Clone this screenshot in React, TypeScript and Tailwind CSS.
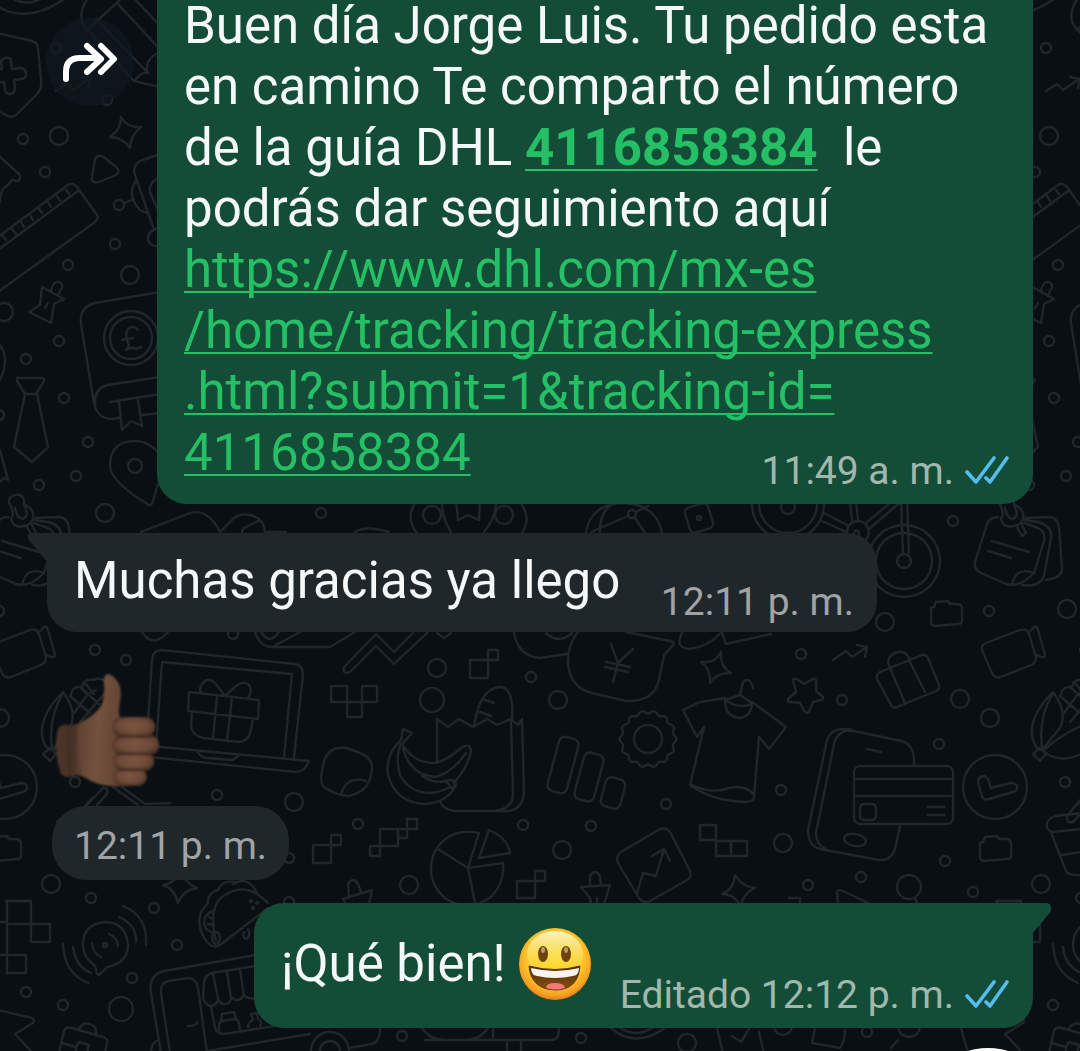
import React, { useState } from 'react';

const smallDots: [number, number][] = [
  [56, 48], [23, 139], [45, 172], [119, 205], [115, 244], [68, 265], [59, 341], [26, 359], [64, 398],
  [-1, 415], [88, 442], [76, 476], [39, 485], [321, 513], [953, 521], [95, 650], [126, 660], [233, 634],
  [531, 677], [801, 654], [842, 700], [989, 611], [939, 744], [781, 790], [217, 795], [75, 782],
  [358, 824], [289, 858], [91, 898], [154, 908], [177, 945], [132, 978], [26, 992], [63, 1005],
  [523, 825], [591, 826], [666, 804], [945, 861], [808, 885], [861, 877], [973, 892], [402, 1036],
  [581, 1038], [867, 1032], [289, 902], [107, 100],
];

const bigDots: [number, number, number][] = [
  [59, 136, 9], [130, 275, 9], [4, 312, 9], [105, 513, 9], [885, 622, 9], [77, 609, 9], [960, 699, 9],
  [437, 668, 9], [432, 700, 12], [558, 700, 9], [0, 718, 9], [294, 802, 9], [51, 884, 9], [121, 1009, 12],
  [562, 850, 9], [409, 885, 9], [783, 843, 9], [909, 887, 12], [687, 1043, 9], [783, 1026, 9],
];

const squares: [number, number, number, number][] = [
  [470, 660, 18, 18], [488, 650, 10, 10], [331, 686, 16, 16], [347, 702, 15, 15], [362, 686, 15, 16],
  [313, 845, 18, 18], [331, 835, 10, 10], [7, 901, 24, 23], [31, 924, 19, 18], [7, 955, 19, 18],
  [380, 829, 18, 17], [407, 819, 10, 10], [398, 829, 9, 9], [370, 846, 10, 10], [517, 881, 18, 17],
  [535, 871, 10, 10], [700, 825, 16, 15], [716, 841, 15, 15], [731, 841, 16, 15],
];

const sunPath =
  Array.from({ length: 120 }, (_, i) => {
    const a = (i / 120) * Math.PI * 2;
    const r = 27 + 1.5 * Math.cos(a * 14);
    return `${i ? 'L' : 'M'}${(648 + r * Math.cos(a)).toFixed(1)} ${(739 + r * Math.sin(a)).toFixed(1)}`;
  }).join('') + 'Z';

const doodlePaths = [
  // shield with cross
  'M-4 35Q0 33 6 35L32 41Q37 42 38 48L41 80Q42 88 38 93L17 114Q12 119 6 115L-6 109',
  'M5 58Q10 56 11 61L12 69L20 68Q26 68 26 74Q26 79 21 79L14 80L15 88Q15 94 10 94Q6 94 5 90L4 82L-4 83M-4 70L2 69L1 62Q1 59 5 58',
  // pencil
  'M90 -4Q79 8 82 22L87 30L121 -1M117 3L157 46M134 -2L160 26M86 28L134 81L160 87M134 81Q142 71 148 73M160 52Q145 58 147 72L96 19',
  // coin
  'M-10 2Q25 27 64 -1M13 -1Q27 6 41 -1',
  'M56 91L67 84L73 90L89 79M80 77L90 79L88 88',
  'M833 660L846 651L852 657L867 647M857 645L867 647L865 657',
  'M121 117Q127 128 141 127Q131 135 130 148Q124 138 110 137Q121 130 121 117Z',
  'M721 652Q720 667 731 673Q716 673 710 683Q711 669 701 662Q715 664 721 652Z',
  'M180 869Q184 883 197 888Q183 890 178 903Q175 889 163 885Q175 884 180 869Z',
  'M735 875Q742 887 755 888Q743 893 741 906Q734 894 722 894Q734 889 735 875Z',
  'M95 159Q99 153 105 158L116 167Q121 171 116 175L99 182Q91 184 92 177Z',
  'M-2 155L19 174Q22 178 18 181L12 180Q8 185 4 188Q0 192 0 202',
  // ruler
  'M-2 237L68 185Q73 182 77 187L97 215Q99 219 95 222L-2 292M-2 250L78 191M2 235L6 240M12 229L16 234M21 222L24 227M30 215L33 220M39 209L42 213M48 202L51 207M57 196L60 201M66 190L69 194',
  // robot
  'M160 154L140 161Q132 166 135 175L153 227M136 181Q126 195 140 210L147 213M124 203L132 200M160 227Q147 231 148 240Q150 247 160 246M160 177Q148 183 150 192L157 208',
  // pushpins
  'M42 287L64 299L54 304L51 323L29 312L40 305ZM51 291Q53 281 59 282Q65 285 60 291L58 296M48 303L45 308',
  'M581 887L610 885L604 904M581 887L590 898L591 904M590 885L590 876Q595 868 600 876L601 885M597 898V904',
  'M343 899L372 890L369 904M343 899L346 904M349 896L348 884Q353 876 358 884L361 892',
  'M-2 342Q12 360 -2 383',
  // tie
  'M17 378L43 378Q45 379 44 381L36 394L25 394L17 381ZM25 394L14 447L32 462L48 447L37 394',
  'M0 450L8 480L4 478L0 482',
  // book
  'M160 292L95 303Q79 307 81 324L93 397Q95 419 112 419L119 418M160 377L108 385Q94 388 95 405M110 402L160 394M119 402L122 430L131 421L142 426L138 400M142 415L160 413',
  'M138 330Q134 325 129 328Q125 330 127 340L129 345L126 350Q133 346 136 349L142 347M122 340L133 338',
  // map pin
  'M149 505Q111 482 110 466Q110 441 135 441Q150 441 160 455M158 484L153 501Q152 506 149 505',
  // sticky notes
  'M998 517Q990 517 987 524L975 562Q973 569 981 573L1006 584Q1020 588 1034 573L1044 541Q1046 532 1038 528L1024 523M1012 585Q1016 566 1034 573M1024 520L1038 522Q1053 526 1051 538L1045 570Q1044 588 1022 585M1026 518L1050 517Q1058 518 1059 528L1062 567Q1063 578 1046 580M992 541L1029 552M988 551L1011 558M1017 527L1022 536L1026 533L1021 523',
  'M1001 506Q996 501 1002 496Q1012 492 1014 500L1014 504L1020 508Q1028 517 1018 525Q1004 530 1001 519L1003 514ZM1005 508Q1007 519 1013 519Q1020 516 1014 505',
  'M141 532L190 513Q208 508 220 532L234 518Q241 513 250 515Q264 518 265 532H286M242 532Q242 529 246 527L260 520M355 532Q365 525 389 532',
  // medal
  'M417 500Q404 517 417 533M442 500Q441 516 451 532M496 500Q497 516 484 532M518 500Q533 516 522 533M456 500L458 520L468 515L479 520L480 500',
  // ball
  'M586 533Q590 504 624 503Q657 505 662 533M591 532L628 516M600 532Q599 512 614 503M635 518L645 533M636 512L648 506',
  // bicycle
  'M901 500L903 553M907 500L909 553M824 513L847 525M822 521L846 532M850 500L852 521M856 500L858 520M894 500L867 522M903 500L869 529M854 535Q854 529 858 531Q860 534 858 539',
  // camera
  'M982 650Q981 645 986 643L1020 630Q1027 628 1029 634L1036 657Q1036 663 1031 665L1001 677Q995 679 992 673ZM1028 633L1034 627Q1037 626 1038 630L1045 655Q1045 658 1041 657L1035 654',
  'M142 632Q153 649 168 632M255 632Q260 647 272 647H330L355 632M261 632Q270 646 279 632M276 645L300 632',
  'M344 667L376 634L394 652L413 633M350 672L376 646L394 664L428 632M344 667Q342 675 350 672M437 633L444 638L451 633',
  'M514 633Q518 656 540 658L567 654M546 633Q559 645 572 633',
  // money bag
  'M578 632Q567 645 568 665Q571 688 592 693L626 701Q654 702 659 680L664 655L673 645Q675 642 670 641L626 632M611 644L618 663L633 649M618 663L613 682M606 662L630 667M605 667L628 672M682 633Q674 648 690 649Q707 647 721 633M722 633L726 644L771 634',
  // laptop and gift
  'M147 740L152 659Q153 650 162 650L295 664Q303 665 303 675L294 757M156 747L162 662L292 674L284 757M150 746L309 761Q305 772 296 772L150 757M197 751Q201 758 207 758L232 760Q236 759 239 755',
  'M189 692L259 700L258 719L188 711ZM192 713L191 725Q192 736 203 738L239 742Q249 741 251 730L253 719M217 697L213 738M232 698L227 741M225 696L215 683Q208 676 202 684Q198 690 202 693M225 696L236 686Q246 679 250 687Q252 693 248 698',
  'M323 766Q326 746 346 748L358 752Q372 757 372 768Q371 792 348 796Q335 795 324 787Q319 783 323 766M341 795Q346 775 366 781',
  // check badge
  'M978 782Q978 776 985 776L988 779L991 788L1011 783Q1018 783 1017 789Q1016 791 1013 792L989 799Q984 801 982 796Z',
  'M983 842L985 837L997 836L999 839L1007 839Q1011 840 1011 844V856Q1011 859 1007 859L984 861Q980 860 980 857V843Z',
  'M934 607L936 602L948 601L950 604L958 604Q962 605 962 609V621Q962 624 958 624L935 626Q931 625 931 622V608Z',
  'M87 805L103 788Q109 787 107 794L97 805M113 787L138 805M122 787L145 804L170 803',
  // taco
  'M216 941Q207 905 225 895Q247 881 268 903M268 908L220 945Q213 949 207 942Q196 928 201 912L208 903Q207 893 218 890Q222 880 235 882M233 884Q248 875 257 893M215 910Q200 915 206 929L213 933M209 917L213 919M208 924L214 925M244 932Q242 938 247 939Q251 936 248 929',
  'M7 924V955M-2 922H7M-2 955H7',
  // chat bubble
  'M95 966L97 974Q99 976 101 973L107 967Q128 963 128 945Q126 922 105 922Q83 924 83 945Q83 957 95 966M109 934Q117 937 118 946M92 943Q93 954 101 957M119 917Q137 925 136 942M123 906Q148 916 146 945M73 947Q75 966 91 973M63 944Q64 973 88 983',
  'M-2 1010L32 1018Q35 1020 33 1023L15 1034L31 1051',
  'M59 1053L64 1031Q66 1026 72 1028L103 1037Q108 1039 107 1043L105 1053M79 1029Q82 1022 90 1024Q97 1027 96 1034M62 1043L76 1047L79 1042L89 1045L87 1053M76 1047V1053',
  // shop front
  'M161 1053L151 993Q148 975 164 971L262 954M170 1053L161 993Q160 983 168 981L188 978Q196 978 198 988L207 1053M188 1026Q197 1026 197 1022M262 965L212 973Q205 975 204 983L203 998Q206 1006 212 1006Q218 1004 218 998L213 974M227 972L231 998M240 969L244 996M218 999Q220 1005 226 1004Q231 1003 231 997Q238 1004 244 995Q248 1000 258 998M211 1007L215 1027Q216 1034 224 1034L300 1022M195 1053L310 1034M151 1053Q151 1043 158 1040',
  'M219 1031V1024Q219 1022 223 1021L234 1019Q238 1019 239 1023L240 1030M221 1021L222 1014L234 1012L236 1019M248 1027Q248 1022 253 1020L251 1014L257 1013L258 1019Q263 1022 260 1026',
  'M349 1048L372 1044Q380 1042 380 1028M422 1028Q430 1040 445 1040M425 1040H552Q559 1040 559 1028M493 1028V1040M488 1028Q480 1040 465 1040M507 1040V1053M521 1040V1053M611 1028Q635 1049 665 1028M620 1028Q636 1038 652 1028M717 1028L723 1053M732 1036L741 1042L749 1029M759 1032L763 1050M815 1028L812 1043L840 1048Q845 1040 845 1030M898 1040L891 1048M961 1028L968 1053',
  // suitcase
  'M880 672L922 655Q926 654 928 658L939 685Q940 689 936 691L897 707Q893 709 891 705L877 679Q876 674 880 672M890 668L905 703M909 660L925 692M890 668Q884 656 898 652Q906 650 910 660',
  'M793 680Q794 678 797 679L804 684L813 679Q816 678 816 681V691L823 697Q824 699 821 700L813 702L809 712Q807 714 804 711L800 703L789 702Q787 701 788 699L796 692Z',
  // shirt
  'M725 698L700 702L683 710L697 737L704 727L690 785Q712 801 745 802Q755 801 754 797L759 737L769 749L786 727L752 702M725 698Q724 717 740 718Q752 716 752 702M727 701Q738 709 752 704M725 700L740 695L752 703M740 695L743 682Q750 676 753 688M690 784Q710 794 725 789Q745 783 754 795',
  // phone
  'M914 765Q915 744 901 741L845 729Q832 728 827 740L808 830Q808 846 820 849L879 860Q893 861 896 845L900 826M850 729Q836 733 834 744L816 833Q816 845 826 849M867 749L881 752',
  'M854 779H953M854 796H953M928 807H944M928 815H944',
  // corn
  'M63 692Q40 715 42 735Q44 747 50 750M63 692Q78 712 70 728L52 750M63 693Q48 718 52 748M50 748L56 754L50 761L43 754ZM54 750Q74 732 100 722M54 752Q72 765 95 752M71 695Q72 686 82 687Q84 678 94 680Q99 676 106 682M70 696L90 713M80 687L99 704M74 713L88 694L96 690M80 722L104 694M84 682L94 694',
  // cup
  'M92 813L65 816Q55 820 57 828L61 832L92 829M61 832L76 871Q78 876 92 875M71 855L92 852M92 798L77 816Q76 824 83 822L92 812',
  // grocery bag and bread
  'M437 762L437 719L448 727L459 719L473 727L487 719L497 725L511 719L518 725L522 719L524 792Q523 810 507 811L455 811Q443 810 440 801M511 720L513 795Q513 808 495 811M474 726Q480 688 500 687Q514 687 512 720M485 700L494 703M480 712L491 716',
  // bananas
  'M401 740Q385 755 388 775Q396 803 425 804Q447 803 456 785M401 744Q395 757 400 775Q410 793 430 793Q442 792 450 787M401 740L403 729L412 733L402 744M403 745Q413 763 435 763Q448 760 461 748Q470 742 471 751Q468 767 454 783M403 748Q410 775 435 777Q452 773 466 753M422 776Q436 785 450 780Q458 780 455 785L452 789M447 782L452 789',
  // pie
  'M479 833Q448 827 434 853Q424 880 446 899Q470 913 492 896Q505 882 503 863L468 868L438 849M468 868L479 833M468 868L475 903M489 830Q508 838 510 853L479 858Z',
  'M621 852L660 829Q666 827 670 832L690 871Q692 877 687 880L650 901Q643 904 639 898L618 863Q615 856 621 852ZM637 893L643 873L656 876L664 849M652 856L664 849L670 861',
  'M789 898H800V905M838 905L837 892Q838 889 843 891L870 904M915 899L919 905M996 901H1021',
];

function DoodleTile() {
  return (
    <g id="doodles">
      {smallDots.map(([x, y]) => <circle key={`${x}-${y}`} cx={x} cy={y} r={5} />)}
      {bigDots.map(([x, y, r]) => <circle key={`${x}-${y}`} cx={x} cy={y} r={r} />)}
      {squares.map(([x, y, w, h]) => <rect key={`${x}-${y}`} x={x} y={y} width={w} height={h} />)}
      {doodlePaths.map((d) => <path key={d} d={d} />)}
      <path d={sunPath} />
      <circle cx={648} cy={739} r={14} />
      <circle cx={131} cy={338} r={27} />
      <circle cx={131} cy={338} r={21} />
      <circle cx={135} cy={466} r={7} />
      <circle cx={432} cy={515} r={9} />
      <circle cx={504} cy={515} r={9} />
      <circle cx={632} cy={514} r={4} />
      <rect x={687} y={505} width={24} height={26} rx={5} transform="rotate(-17 699 518)" />
      <circle cx={699} cy={518} r={2} />
      <circle cx={788} cy={504} r={36} />
      <circle cx={788} cy={504} r={29} />
      <circle cx={788} cy={507} r={7} />
      <circle cx={904} cy={561} r={36} />
      <circle cx={904} cy={561} r={28} />
      <circle cx={904} cy={561} r={7} />
      <circle cx={858} cy={532} r={11} />
      <circle cx={995} cy={787} r={32} />
      <circle cx={105} cy={945} r={2} />
      <circle cx={251} cy={901} r={1} />
      <circle cx={257} cy={903} r={1} />
      <circle cx={253} cy={908} r={1} />
      <ellipse cx={216} cy={938} rx={4} ry={6} />
      <ellipse cx={855} cy={840} rx={11} ry={6} transform="rotate(10 855 840)" />
      <rect x={854} y={766} width={99} height={58} rx={6} />
      <rect x={860} y={804} width={16} height={16} rx={4} />
      <rect x={553} y={737} width={20} height={56} rx={6} transform="rotate(15 563 765)" />
      <rect x={579} y={753} width={20} height={48} rx={6} transform="rotate(15 589 777)" />
      <rect x={603} y={778} width={20} height={30} rx={6} transform="rotate(15 613 793)" />
      <circle cx={330} cy={1051} r={19} />
      <circle cx={330} cy={1051} r={10} />
      <circle cx={909} cy={1026} r={11} />
    </g>
  );
}

function Wallpaper() {
  return (
    <svg
      aria-hidden="true"
      className="pointer-events-none absolute inset-0 h-full w-full"
      viewBox="0 0 1080 1051"
      preserveAspectRatio="xMidYMin slice"
      fill="none"
      stroke="#20262a"
      strokeWidth={2.4}
      strokeLinecap="round"
      strokeLinejoin="round"
    >
      <DoodleTile />
      <use href="#doodles" x={990} />
      <use href="#doodles" x={-990} />
    </svg>
  );
}

function ReadTicks() {
  return (
    <svg role="img" aria-label="Leído" className="ml-[11px] h-8 w-11 shrink-0" viewBox="0 0 44 32" fill="none" stroke="#53bdeb" strokeWidth={3.6} strokeLinecap="round" strokeLinejoin="round">
      <path d="M2 17L11 27L29 3" />
      <path d="M21 23L25 27L42 3" />
    </svg>
  );
}

function Smiley() {
  return (
    <svg role="img" aria-label="😃" className="h-18 w-18 shrink-0" viewBox="0 0 72 72">
      <defs>
        <radialGradient id="face" cx="50%" cy="42%" r="58%">
          <stop offset="0" stopColor="#fbd928" />
          <stop offset="0.65" stopColor="#fccb2b" />
          <stop offset="0.88" stopColor="#f9a322" />
          <stop offset="1" stopColor="#e37c1c" />
        </radialGradient>
        <linearGradient id="shine" x1="0" y1="0" x2="0" y2="1">
          <stop offset="0" stopColor="#fdf3c4" />
          <stop offset="1" stopColor="#fbdc3c" stopOpacity="0" />
        </linearGradient>
        <linearGradient id="mouth" x1="0" y1="0" x2="0" y2="1">
          <stop offset="0" stopColor="#4e2c05" />
          <stop offset="1" stopColor="#8a5208" />
        </linearGradient>
      </defs>
      <circle cx="36" cy="36" r="36" fill="url(#face)" />
      <ellipse cx="36" cy="26" rx="28" ry="23" fill="url(#shine)" />
      <ellipse cx="24" cy="26" rx="5" ry="8" fill="#6f4308" />
      <ellipse cx="47" cy="26" rx="5" ry="8" fill="#6f4308" />
      <ellipse cx="24" cy="22" rx="2" ry="3" fill="#b99a6b" />
      <ellipse cx="47" cy="22" rx="2" ry="3" fill="#b99a6b" />
      <path d="M10 38Q36 45 61 38Q59 62 36 62Q12 61 10 38Z" fill="url(#mouth)" stroke="#5a3305" strokeWidth="1" />
      <path d="M12 40Q36 46 60 40Q60 47 54 48Q36 52 18 48Q12 47 12 40Z" fill="#f7f3ef" />
      <path d="M27 60Q27 55 36 55Q45 55 46 60Q36 63 27 60Z" fill="#f4777c" />
    </svg>
  );
}

function ThumbsUp() {
  return (
    <svg role="img" aria-label="👍🏾" className="h-29 w-27" viewBox="0 0 108 116">
      <defs>
        <linearGradient id="palm" x1="0" y1="0.3" x2="1" y2="0.4">
          <stop offset="0" stopColor="#3d2a20" />
          <stop offset="0.35" stopColor="#604233" />
          <stop offset="0.6" stopColor="#74523e" />
          <stop offset="1" stopColor="#5d4030" />
        </linearGradient>
        <radialGradient id="finger" cx="50%" cy="45%" r="60%">
          <stop offset="0" stopColor="#7b5540" />
          <stop offset="0.55" stopColor="#6f4c39" />
          <stop offset="1" stopColor="#483023" />
        </radialGradient>
        <linearGradient id="wrist" x1="0" y1="0" x2="1" y2="0">
          <stop offset="0" stopColor="#573b2d" />
          <stop offset="0.5" stopColor="#3d291f" />
          <stop offset="1" stopColor="#3d291f" stopOpacity="0" />
        </linearGradient>
        <filter id="soften" x="-5%" y="-5%" width="110%" height="110%">
          <feGaussianBlur stdDeviation="0.8" />
        </filter>
      </defs>
      <g filter="url(#soften)">
        <path d="M6 56Q9 51 16 52Q24 53 31 48Q45 41 50 31Q53 21 52 10Q51 2 56 1Q62 2 67 11Q70 18 68 29Q66 38 68 45L75 80V113Q53 115 39 108Q30 102 24 102Q15 107 9 101Q1 75 6 56Z" fill="url(#palm)" />
        <path d="M6 56Q9 51 16 52Q22 52 27 50Q22 76 32 104Q28 101 24 102Q15 107 9 101Q1 75 6 56Z" fill="url(#wrist)" opacity="0.7" />
        <rect x="61" y="95" width="34" height="18" rx="9" fill="url(#finger)" />
        <rect x="61" y="79" width="41" height="19" rx="9" fill="url(#finger)" />
        <rect x="60" y="62" width="47" height="20" rx="9" fill="url(#finger)" />
        <rect x="60" y="44" width="43" height="20" rx="9" fill="url(#finger)" />
        <path d="M67 64H99M65 81H101M67 97H93" stroke="#3b2519" strokeWidth="1.5" strokeLinecap="round" />
      </g>
    </svg>
  );
}

export default function App() {
  const [forwarded, setForwarded] = useState(false);
  const link = 'text-[#25bf65] underline decoration-2 underline-offset-4 [text-decoration-skip-ink:none]';
  return (
    <main className="relative flex min-h-screen flex-col overflow-hidden bg-[#0a0f13] font-['Roboto','Open_Sans',sans-serif] text-[51px] leading-[61px] text-[#f5f8f8]">
      <Wallpaper />

      <section className="relative -mt-[5px] flex items-start justify-end pr-[47px] pl-[46px]">
        <button
          type="button"
          aria-label="Reenviar"
          aria-pressed={forwarded}
          onClick={() => setForwarded(!forwarded)}
          className="mt-[23px] mr-auto flex size-[88px] items-center justify-center rounded-full bg-[#0f1920]/75"
        >
          <svg className="h-10 w-14" viewBox="0 0 56 40" fill="none" stroke="#ffffff" strokeWidth={6} strokeLinecap="round" strokeLinejoin="round">
            <path d="M4 37V30Q4 16 18 16H37M25 4L39 17L25 30M39 4L52 17L39 30" />
          </svg>
        </button>
        <article className="flex w-[876px] items-end justify-between rounded-b-[30px] bg-[#144d37] pr-6 pb-[21px] pl-[27px]">
          <p className="whitespace-nowrap">
            Buen día Jorge Luis. Tu pedido esta<br />
            en camino Te comparto el número<br />
            de la guía DHL <a href="#guia" className={`${link} font-bold`}>4116858384</a>&nbsp; le<br />
            podrás dar seguimiento aquí<br />
            <a href="#seguimiento" className={link}>
              https://www.dhl.com/mx-es<br />
              /home/tracking/tracking-express<br />
              .html?submit=1&amp;tracking-id=<br />
              4116858384
            </a>
          </p>
          <div className="-mb-3 -ml-60 flex shrink-0 items-center text-[39px] leading-[48px] whitespace-nowrap text-[#a1b8af]">
            <time>11:49 a. m.</time>
            <ReadTicks />
          </div>
        </article>
      </section>

      <section className="relative mt-[29px] pl-[47px]">
        <svg aria-hidden="true" className="absolute top-0 left-7 h-8 w-5" viewBox="0 0 20 32" fill="#1f272a">
          <path d="M20 0H2Q-1 0 0 5Q1 8 5 12L20 30Z" />
        </svg>
        <article className="flex h-[99px] w-[830px] items-end justify-between rounded-[30px] rounded-tl-none bg-[#1f272a] pr-[23px] pb-[21px] pl-[27px] whitespace-nowrap">
          <p>Muchas gracias ya llego</p>
          <time className="-mb-[15px] text-[39px] leading-[48px] text-[#a0a4a6]">12:11 p. m.</time>
        </article>
      </section>

      <section className="relative mt-[41px] flex flex-col items-start pl-[52px]">
        <ThumbsUp />
        <article className="mt-[17px] rounded-[34px] bg-[#1f272a] px-[22px] pt-4 pb-[10px]">
          <time className="block text-[39px] leading-[48px] whitespace-nowrap text-[#a0a4a6]">12:11 p. m.</time>
        </article>
      </section>

      <section className="relative mt-[23px] flex justify-end pr-[47px]">
        <article className="flex h-[125px] w-[779px] items-end justify-between rounded-[30px] rounded-tr-none bg-[#144d37] pr-6 pb-[9px] pl-[27px] whitespace-nowrap">
          <p className="flex items-center gap-[13px] self-center pt-[5px]">
            ¡Qué bien! <Smiley />
          </p>
          <div className="flex items-center text-[39px] leading-[48px] text-[#a1b8af]">
            <span>Editado&nbsp;</span>
            <time>12:12 p. m.</time>
            <ReadTicks />
          </div>
        </article>
        <svg aria-hidden="true" className="absolute top-0 right-7 h-8 w-5" viewBox="0 0 20 32" fill="#144d37">
          <path d="M0 0H15Q20 1 19 7Q19 9 16 12L0 31Z" />
        </svg>
      </section>

      <button type="button" aria-label="Ir al final" className="absolute top-[1048px] right-6 size-[136px] rounded-full bg-white" />
    </main>
  );
}
